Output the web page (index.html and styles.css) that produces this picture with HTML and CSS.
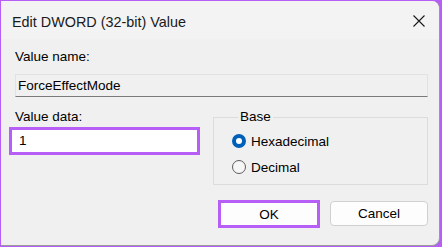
FILE: index.html
```html
<!DOCTYPE html>
<html lang="en">
<head>
    <meta charset="UTF-8">
    <title>Edit DWORD (32-bit) Value</title>
    <link rel="stylesheet" href="styles.css">
</head>
<body>
    <div class="window">
        <div class="title-bar">
            <span class="title">Edit DWORD (32-bit) Value</span>
            <button class="close-btn" aria-label="Close">
                <svg width="12" height="12" viewBox="0 0 12 12">
                    <path d="M0.5 0.5 L11.5 11.5 M11.5 0.5 L0.5 11.5" stroke="#1a1a1a" stroke-width="1.1" fill="none"/>
                </svg>
            </button>
        </div>

        <div class="dialog-body">
            <label class="field-label">Value name:</label>
            <div class="name-box">ForceEffectMode</div>

            <div class="data-row">
                <div class="data-col">
                    <label class="field-label data-label">Value data:</label>
                    <div class="data-box">1</div>
                </div>

                <fieldset class="base-group">
                    <legend>Base</legend>
                    <div class="radio-row">
                        <span class="radio checked"></span>
                        <span>Hexadecimal</span>
                    </div>
                    <div class="radio-row">
                        <span class="radio"></span>
                        <span>Decimal</span>
                    </div>
                </fieldset>
            </div>

            <div class="button-row">
                <button class="btn btn-ok">OK</button>
                <button class="btn">Cancel</button>
            </div>
        </div>
    </div>
</body>
</html>
```

FILE: styles.css
```css
* {
    box-sizing: border-box;
    margin: 0;
    padding: 0;
}

body {
    width: 442px;
    height: 247px;
    background: #b65ef5;
    font-family: "Liberation Sans", Arial, sans-serif;
    font-size: 13.5px;
    color: #000;
    overflow: hidden;
}

.window {
    width: 439px;
    height: 245px;
    margin: 1px 0 0 1px;
    background: #f0f0f0;
    border: 1px solid #9a9a9a;
    border-top: none;
    border-left: none;
    border-radius: 0 8px 8px 0;
    overflow: hidden;
}

.title-bar {
    height: 38px;
    display: flex;
    align-items: center;
    justify-content: space-between;
    padding: 0 14px 0 11px;
    background: #f3f3f3;
}

.title {
    font-size: 14.4px;
    color: #1a1a1a;
    padding-top: 3px;
}

.close-btn {
    background: none;
    border: none;
    width: 12px;
    height: 12px;
    display: flex;
    margin-top: 1px;
}

.dialog-body {
    padding: 10px 11px 0 8px;
}

.field-label {
    display: block;
    line-height: 16px;
    padding-left: 6px;
}

.name-box {
    margin: 9px 0 0 6px;
    height: 23px;
    line-height: 21px;
    padding-left: 2px;
    background: #f0f0f0;
    border: 1px solid #e2e2e2;
    border-bottom: 1px solid #7a7a7a;
}

.data-row {
    display: flex;
    margin-top: 8px;
}

.data-col {
    width: 191px;
}

.data-label {
    margin-top: 4px;
}

.data-box {
    margin-top: 2px;
    height: 28px;
    line-height: 22px;
    padding-left: 7px;
    background: #fff;
    border: 3px solid #b65ef5;
}

.base-group {
    margin: 4px 0 0 13px;
    flex: 1;
    height: 76px;
    border: 1px solid #dcdcdc;
    padding: 3px 0 0 18px;
}

.base-group legend {
    padding: 0 2px;
    margin-left: 6px;
    line-height: 16px;
}

.radio-row {
    display: flex;
    align-items: center;
    gap: 5px;
    height: 26px;
}

.radio {
    width: 14px;
    height: 14px;
    border-radius: 50%;
    border: 1px solid #5c5c5c;
    background: #f6f6f6;
}

.radio.checked {
    border: 4px solid #005fb8;
    background: #fff;
}

.button-row {
    display: flex;
    justify-content: flex-end;
    gap: 10px;
    margin-top: 15px;
}

.btn {
    width: 98px;
    height: 25px;
    margin-top: 1px;
    font-family: inherit;
    font-size: 13.5px;
    color: #000;
    background: #fdfdfd;
    border: 1px solid #d0d0d0;
    border-radius: 4px;
}

.btn-ok {
    width: 102px;
    height: 28px;
    margin-top: 0;
    border: 3px solid #b65ef5;
    border-radius: 0;
}
```
